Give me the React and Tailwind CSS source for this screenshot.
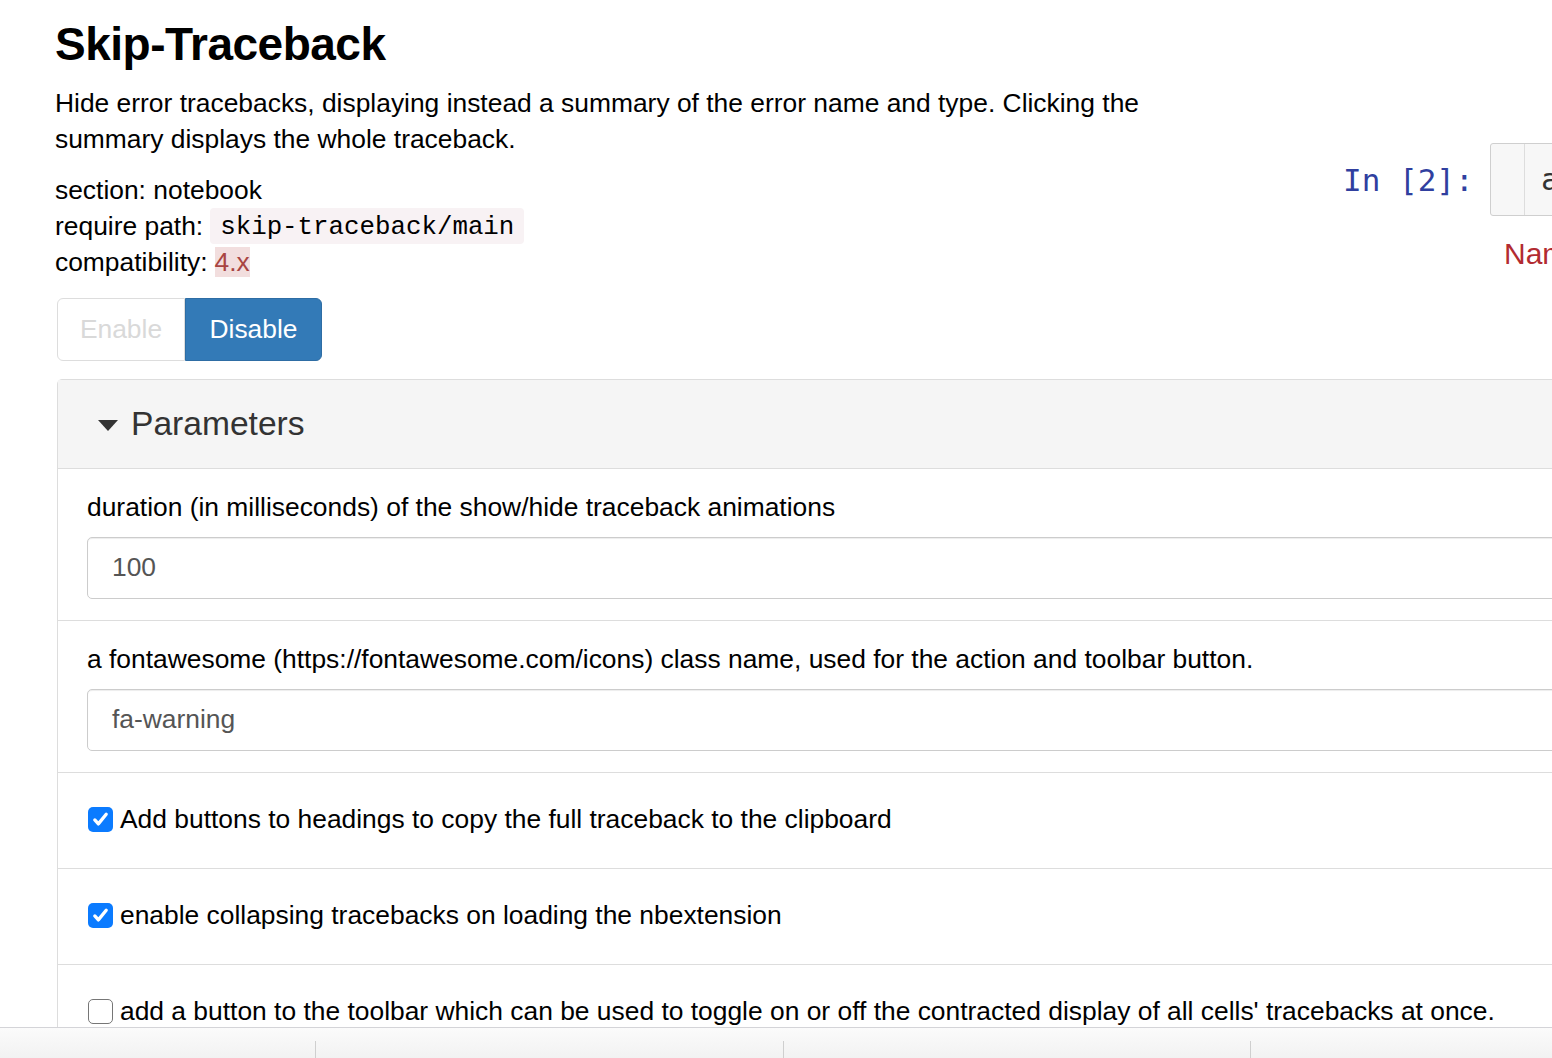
import { useState } from "react";

function Check({ checked }) {
  if (!checked) {
    return <span className="inline-block w-[25px] h-[25px] shrink-0 rounded-[5px] border-[1.5px] border-[#767676] bg-white" />;
  }
  return (
    <span className="inline-flex w-[25px] h-[25px] shrink-0 items-center justify-center rounded-[5px] bg-[#0b7bff]">
      <svg width="19" height="19" viewBox="0 0 16 16" fill="none">
        <path d="M3.2 8.4l3 3.3L12.8 3.6" stroke="white" strokeWidth="2.8" strokeLinecap="round" strokeLinejoin="round" />
      </svg>
    </span>
  );
}

function TextParam({ label, value }) {
  return (
    <div className="border-b border-[#dddddd] pl-[29px] pt-[20px] pb-[21px]">
      <div className="leading-[36px]">{label}</div>
      <div className="mt-[12px] h-[62px] rounded-[5px] border border-[#cccccc] shadow-[inset_0_1px_1px_rgba(0,0,0,0.075)] flex items-center pl-[24px] text-[#555555]">
        {value}
      </div>
    </div>
  );
}

function CheckParam({ label, checked, last }) {
  return (
    <div className={"pl-[30px] pt-[28px] pb-[31px] " + (last ? "" : "border-b border-[#dddddd]")}>
      <label className="flex items-center gap-[7px] leading-[36px]">
        <Check checked={checked} />
        <span>{label}</span>
      </label>
    </div>
  );
}

export default function App() {
  const [enabled] = useState(true);

  return (
    <div className="w-[1552px] h-[1058px] overflow-hidden bg-white text-black font-['Liberation_Sans',Arial,sans-serif] text-[26.4px]">
      <div className="h-[1027px] overflow-hidden">
        <div className="w-[1700px] pl-[55px]">
          <div className="flex">
            <div className="w-[1288px] shrink-0">
              <h2 className="pt-[19px] text-[46px] leading-[50px] font-bold tracking-[-0.5px]">Skip-Traceback</h2>
              <p className="mt-[16px] w-[1100px] leading-[36px]">
                Hide error tracebacks, displaying instead a summary of the error name and type. Clicking the summary displays the whole traceback.
              </p>
              <div className="mt-[15px] leading-[36px]">
                <div>section: notebook</div>
                <div className="flex items-center">
                  <span>require path:</span>
                  <code className="ml-[7px] rounded-[4px] bg-[#f8f2f4] px-[10px] pt-[3px] font-['Liberation_Mono',monospace] text-[25.8px] leading-[33px]">skip-traceback/main</code>
                </div>
                <div className="flex items-center">
                  <span>compatibility:</span>
                  <span className="ml-[7px] bg-[#f2dede] text-[#a94442] leading-[30px]">4.x</span>
                </div>
              </div>
              <div className="mt-[18px] ml-[2px] flex h-[63px]">
                <button className={"w-[128px] text-center rounded-l-[6px] border border-[#dddddd] bg-white " + (enabled ? "text-[#d9d9d9]" : "text-black")}>Enable</button>
                <button className="w-[137px] text-center rounded-r-[6px] border border-[#2e6da4] bg-[#337ab7] text-white">Disable</button>
              </div>
            </div>
            <div className="flex-1">
              <div className="mt-[143px] flex items-center">
                <div className="w-[147px] font-['DejaVu_Sans_Mono',monospace] text-[31px] text-[#303f9f] leading-[40px]">In [2]:</div>
                <div className="flex h-[73px] w-[200px] rounded-[3px] border border-[#cfcfcf] bg-[#f7f7f7]">
                  <div className="w-[34px] border-r border-[#dddddd]" />
                  <div className="pl-[16px] flex items-center font-['DejaVu_Sans_Mono',monospace] text-[31px] text-[#333333]">a</div>
                </div>
              </div>
              <div className="mt-[20px] ml-[161px] text-[30px] leading-[36px] text-[#b22b31] whitespace-nowrap">NameError</div>
            </div>
          </div>

          <div className="mt-[18px] ml-[2px] border border-[#dddddd] rounded-tl-[5px]">
            <div className="h-[89px] bg-[#f5f5f5] border-b border-[#dddddd] flex items-center pl-[40px]">
              <svg width="20" height="11" viewBox="0 0 20 11" className="mr-[13px] mt-[2px]">
                <path d="M0 0h20L10 11z" fill="#333333" />
              </svg>
              <span className="text-[33.6px] text-[#333333]">Parameters</span>
            </div>
            <TextParam label="duration (in milliseconds) of the show/hide traceback animations" value="100" />
            <TextParam label="a fontawesome (https://fontawesome.com/icons) class name, used for the action and toolbar button." value="fa-warning" />
            <CheckParam checked label="Add buttons to headings to copy the full traceback to the clipboard" />
            <CheckParam checked label="enable collapsing tracebacks on loading the nbextension" />
            <CheckParam last label="add a button to the toolbar which can be used to toggle on or off the contracted display of all cells' tracebacks at once." />
          </div>
        </div>
      </div>
      <div className="h-[31px] border-t border-[#d4d4d8] bg-gradient-to-b from-[#fbfbfb] to-[#f2f2f2] flex">
        <div className="w-[315px]" />
        <div className="w-[468px] mt-[13px] border-l border-[#cfcfcf]" />
        <div className="w-[467px] mt-[13px] border-l border-[#cfcfcf]" />
        <div className="flex-1 mt-[13px] border-l border-[#cfcfcf]" />
      </div>
    </div>
  );
}
